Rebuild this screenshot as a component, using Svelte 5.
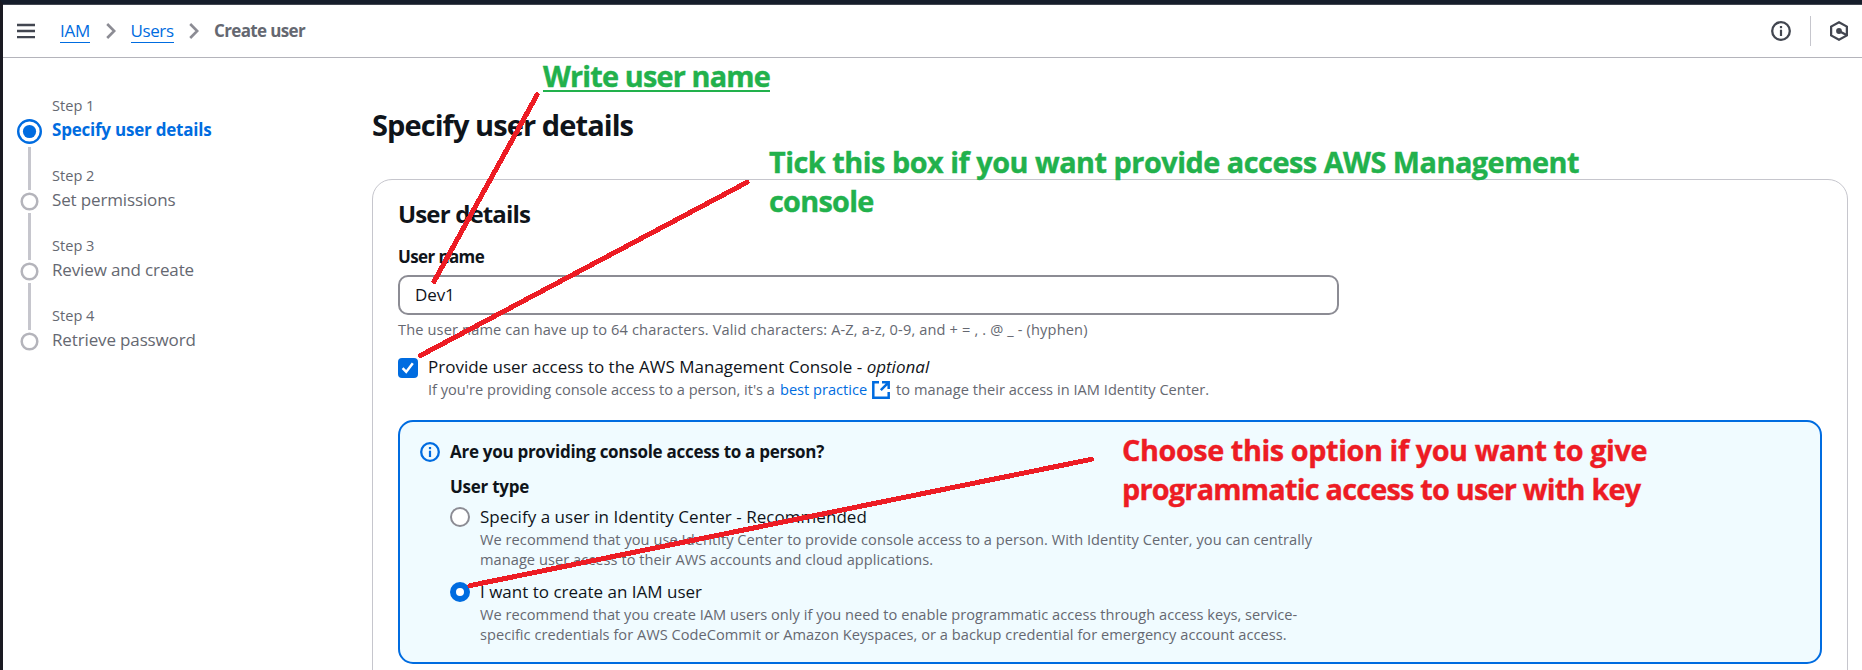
<script>
  const steps = [
    { label: 'Step 1', title: 'Specify user details', active: true },
    { label: 'Step 2', title: 'Set permissions' },
    { label: 'Step 3', title: 'Review and create' },
    { label: 'Step 4', title: 'Retrieve password' }
  ];
</script>

{#snippet info()}
  <svg class="info" viewBox="0 0 20 20" width="20" height="20">
    <circle cx="10" cy="10" r="8.8" fill="none" stroke="currentColor" stroke-width="2.3" />
    <rect x="8.9" y="5" width="2.2" height="2.2" fill="currentColor" />
    <path d="M8.9 8.7h2.2V15H8.9z" fill="currentColor" />
  </svg>
{/snippet}

{#snippet chevron()}
  <svg class="chevron" viewBox="0 0 10 16" width="10" height="16">
    <path d="M1.2 1 8.2 8l-7 7" fill="none" stroke="#8c8c94" stroke-width="2.6" />
  </svg>
{/snippet}

<div class="page">
  <header>
    <svg class="menu" viewBox="0 0 18 16" width="18" height="16">
      <path d="M0 2h18M0 8h18M0 14.2h18" stroke="#424650" stroke-width="2.3" />
    </svg>
    <nav>
      <span class="crumb iam">IAM</span>
      {@render chevron()}
      <span class="crumb users">Users</span>
      {@render chevron()}
      <b>Create user</b>
    </nav>
    <div class="tools">
      {@render info()}
      <i></i>
      <svg viewBox="0 0 18 20" width="18" height="20">
        <path d="M9 1.3 16.9 5.6v8.8L9 18.7 1.1 14.4V5.6z" fill="none" stroke="currentColor" stroke-width="2.3" />
        <circle cx="9" cy="10" r="2.9" fill="currentColor" />
        <path d="m9 10 7.5 4" stroke="currentColor" stroke-width="2.3" />
      </svg>
    </div>
  </header>

  <div class="body">
    <ol>
      {#each steps as step}
        <li class:active={step.active}>
          <div class="track">
            <svg viewBox="0 0 25 25" width="25" height="25">
              {#if step.active}
                <circle cx="12.5" cy="12.5" r="11.3" fill="none" stroke="#006ce0" stroke-width="2.4" />
                <circle cx="12.5" cy="12.5" r="6.6" fill="#006ce0" />
              {:else}
                <circle cx="12.5" cy="12.5" r="7.8" fill="none" stroke="#b4b4bb" stroke-width="2.5" />
              {/if}
            </svg>
          </div>
          <div>
            <div class="label">{step.label}</div>
            <div class="title">{step.title}</div>
          </div>
        </li>
      {/each}
    </ol>

    <main>
      <h1>Specify user details</h1>
      <section class="card">
        <h2>User details</h2>
        <div class="field">User name</div>
        <div class="input">Dev1</div>
        <p class="hint constraint">The user name can have up to 64 characters. Valid characters: A-Z, a-z, 0-9, and + = , . @ _ - (hyphen)</p>

        <div class="choice access">
          <span class="check">
            <svg viewBox="0 0 20 20" width="20" height="20"><path d="m4.6 10.2 3.6 3.7 6.6-8.6" fill="none" stroke="#fff" stroke-width="2.5" /></svg>
          </span>
          <div>
            <div class="text">Provide user access to the AWS Management Console - <em>optional</em></div>
            <p class="hint row">
              <span>If you're providing console access to a person, it's a</span>
              <span class="link">best practice</span>
              <svg viewBox="0 0 18 18" width="18" height="18">
                <path d="M7 1.3H1.3v15.4h15.4V11M10 1.3h6.7V8M16.4 1.6 8.8 9.2" fill="none" stroke="#006ce0" stroke-width="2.5" />
              </svg>
              <span class="after">to manage their access in IAM Identity Center.</span>
            </p>
          </div>
        </div>

        <div class="alert">
          {@render info()}
          <div>
            <div class="question">Are you providing console access to a person?</div>
            <div class="type">User type</div>
            <div class="choice">
              <span class="radio"></span>
              <div>
                <div class="text wide">Specify a user in Identity Center - Recommended</div>
                <p class="hint desc">We recommend that you use Identity Center to provide console access to a person. With Identity Center, you can centrally<br />manage user access to their AWS accounts and cloud applications.</p>
              </div>
            </div>
            <div class="choice">
              <span class="radio on"></span>
              <div>
                <div class="text">I want to create an IAM user</div>
                <p class="hint desc second">We recommend that you create IAM users only if you need to enable programmatic access through access keys, service-<br />specific credentials for AWS CodeCommit or Amazon Keyspaces, or a backup credential for emergency account access.</p>
              </div>
            </div>
          </div>
        </div>
      </section>
    </main>
  </div>

  <span class="handle"></span>
  <svg class="lines" viewBox="0 0 1862 670" width="1862" height="670">
    <path d="M537 95 434 281.5M747 182.3 420.5 355.5M1091.5 459.3 470 585.6" />
  </svg>
  <div class="note write">Write user name</div>
  <div class="note tick">Tick this box if you want provide access AWS Management<br /><span class="console">console</span></div>
  <div class="note choose">Choose this option if you want to give<br /><span class="keyed">programmatic access to user with key</span></div>
</div>

<style>
  :global(body) { margin: 0; background: #fff; }
  * { box-sizing: border-box; }
  .page {
    position: relative; width: 1862px; height: 670px; overflow: hidden;
    border-left: 3px solid #1a1a22; border-top: 4px solid #161d2b;
    font: 17px/25px "Open Sans", sans-serif; color: #0f141a; background: #fff;
  }
  svg { display: block; flex: none; }
  h1, h2, p, ol { margin: 0; padding: 0; }

  header {
    height: 54px; border-top: 1px solid #424650; border-bottom: 1px solid #b4b4bb;
    display: flex; align-items: center; padding: 0 14px; color: #424650;
  }
  nav { display: flex; align-items: center; margin-left: 25px; }
  .crumb { color: #006ce0; border-bottom: 1px solid #006ce0; height: 24px; line-height: 23px; }
  .iam { width: 30px; letter-spacing: -.2px; }
  .users { width: 43px; letter-spacing: -.4px; }
  .chevron { margin: 0 15px 0 15.5px; }
  nav b { color: #656871; letter-spacing: -.64px; font-weight: 700; line-height: 23px; margin-bottom: 1px; }
  .tools { margin-left: auto; display: flex; align-items: center; }
  .tools i { width: 1px; height: 30px; background: #c6c6cd; margin: 0 19px; }

  .body { display: flex; }
  ol { width: 369px; padding: 37px 0 0 14px; list-style: none; color: #656871; }
  li { display: flex; height: 70px; }
  .track { width: 35px; position: relative; padding-top: 24px; }
  li:not(:last-child) .track::after { content: ""; position: absolute; left: 11px; top: 50px; width: 3px; height: 47px; background: #c6c6cd; }
  li:not(.active):not(:last-child) .track::after { top: 48px; height: 47px; }
  .active:not(:last-child) .track::after { top: 52px !important; height: 43px !important; }
  .label { font-size: 14.6px; line-height: 20px; }
  .title { letter-spacing: -.14px; margin-top: 2px; }
  .active .title { color: #006ce0; font-weight: 700; letter-spacing: -.22px; }

  main { width: 1476px; padding-top: 48px; }
  h1 { font-size: 29px; line-height: 37px; font-weight: 700; letter-spacing: -.92px; }
  .card { margin-top: 36px; height: 560px; border: 1px solid #c6c6cd; border-radius: 20px; padding: 19px 25px; }
  h2 { font-size: 24px; line-height: 30px; font-weight: 700; letter-spacing: -.85px; }
  .field { font-weight: 700; line-height: 24px; margin-top: 16px; letter-spacing: -.62px; }
  .input { width: 941px; height: 40px; margin-top: 6px; border: 2px solid #8c8c94; border-radius: 10px; padding: 0 15px; line-height: 35px; letter-spacing: -.1px; }
  .hint { font-size: 14.6px; line-height: 20px; color: #656871; white-space: nowrap; }
  .constraint { margin-top: 4px; letter-spacing: .14px; }
  .choice { display: flex; gap: 10px; }
  .access { margin-top: 15px; }
  .check { width: 20px; height: 20px; margin-top: 4px; border-radius: 4px; background: #006ce0; flex: none; }
  .text { white-space: nowrap; }
  .wide { letter-spacing: .04px; }
  .row { display: flex; align-items: center; height: 21px; }
  .link { color: #006ce0; margin-left: 5px; }
  .row span { margin-bottom: 1px; }
  .row svg { margin: 1px 6px 0 5px; }
  .after { letter-spacing: .03px; }

  .alert { margin-top: 20px; width: 1424px; height: 244px; border: 2px solid #006ce0; border-radius: 15px; background: #f0fbff; display: flex; padding: 17px 20px; gap: 10px; }
  .alert .info { color: #006ce0; margin-top: 3px; }
  .question { font-weight: 700; letter-spacing: -.28px; }
  .type { font-weight: 700; letter-spacing: -.26px; line-height: 24px; margin: 11px 0 5px; }
  .desc { letter-spacing: .05px; }
  .second { letter-spacing: .03px; }
  .choice + .choice { margin-top: 10px; }
  .radio { width: 20px; height: 20px; margin-top: 3px; border: 2px solid #8c8c94; border-radius: 50%; background: #fff; flex: none; }
  .on { border: 6px solid #006ce0; }

  .handle { position: absolute; left: -3px; top: 324px; width: 3px; height: 7px; background: #fff; border: solid #000; border-width: 1px 1px 1px 0; }
  .lines { position: absolute; left: -3px; top: -4px; fill: none; stroke: #ed1c24; stroke-width: 5; stroke-linecap: round; shape-rendering: crispEdges; }
  .note { position: absolute; font-size: 28.8px; line-height: 39px; font-weight: 700; white-space: nowrap; color: #22b14c; -webkit-text-stroke: .4px currentColor; }
  .write { left: 540px; top: 52px; letter-spacing: -.81px; text-decoration: underline; text-decoration-thickness: 2px; text-underline-offset: 3px; text-decoration-skip-ink: none; }
  .tick { left: 766px; top: 138px; letter-spacing: -.47px; }
  .console { letter-spacing: -.7px; }
  .choose { left: 1119px; top: 426px; letter-spacing: -.41px; color: #ed1c24; }
  .keyed { letter-spacing: -.76px; }
</style>
